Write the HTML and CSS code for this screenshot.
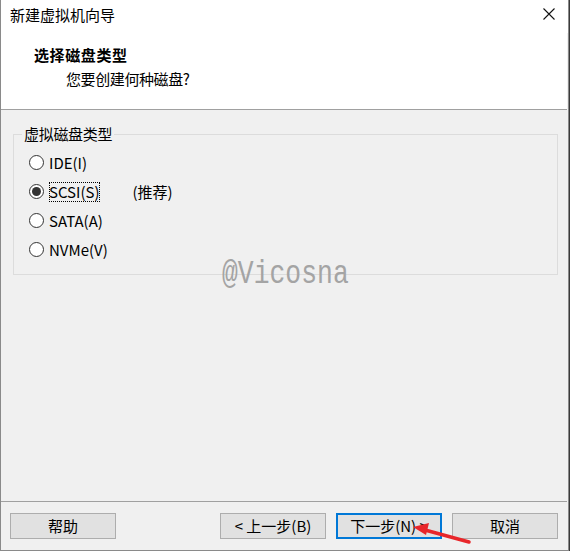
FILE: index.html
```html
<!DOCTYPE html>
<html>
<head>
<meta charset="utf-8">
<link rel="stylesheet" href="styles.css">
</head>
<body>
<div class="window">
  <div class="titlebar">
    <span class="title">新建虚拟机向导</span>
    <svg class="close" width="12" height="12" viewBox="0 0 12 12"><path d="M0.5 0.5L11.5 11.5M11.5 0.5L0.5 11.5" stroke="#111" stroke-width="1.1" fill="none"/></svg>
  </div>
  <div class="header">
    <div class="h-title">选择磁盘类型</div>
    <div class="h-sub">您要创建何种磁盘?</div>
  </div>
  <div class="body">
    <fieldset class="group">
      <legend>虚拟磁盘类型</legend>
      <div class="opt"><span class="radio"></span><span class="lbl">IDE(I)</span></div>
      <div class="opt"><span class="radio on"></span><span class="lbl focus">SCSI(S)</span><span class="rec">(推荐)</span></div>
      <div class="opt"><span class="radio"></span><span class="lbl">SATA(A)</span></div>
      <div class="opt"><span class="radio"></span><span class="lbl">NVMe(V)</span></div>
    </fieldset>
    <div class="watermark">@Vicosna</div>
  </div>
  <div class="footer">
    <button class="btn">帮助</button>
    <div class="spacer"></div>
    <button class="btn">&lt; 上一步(B)</button>
    <button class="btn primary">下一步(N) &gt;</button>
    <button class="btn">取消</button>
    <svg class="arrow" width="70" height="30" viewBox="0 0 70 30"><path d="M60 25 L16 13" stroke="#e8262a" stroke-width="3.5" stroke-linecap="round"/><path d="M4 10 L20 6 L17 18 Z" fill="#e8262a"/></svg>
  </div>
</div>
</body>
</html>
```
FILE: styles.css
```css
* { box-sizing: border-box; }
html, body { margin: 0; padding: 0; }
body {
  width: 570px;
  height: 551px;
  background: #3a3a3a;
  font-family: "Noto Sans CJK SC", "Microsoft YaHei", sans-serif;
  font-size: 15px;
  color: #000;
  overflow: hidden;
}
.window {
  width: 569px;
  height: 551px;
  background: #f0f0f0;
  border-left: 1px solid #8a8a8a;
  border-right: 1px solid #8a8a8a;
  border-bottom: 1px solid #8a8a8a;
  display: flex;
  flex-direction: column;
  position: relative;
}
.titlebar {
  height: 33px;
  background: #fff;
  display: flex;
  align-items: center;
  justify-content: space-between;
  padding: 0 14px 0 9px;
}
.title { font-size: 15px; line-height: 20px; margin-top: -4px; }
.close { margin-top: -5px; margin-right: -1px; }
.header {
  height: 77px;
  background: #fff;
  border-bottom: 1px solid #a0a0a0;
  padding: 12px 0 0 33px;
  margin-right: 1px;
}
.h-title { font-weight: bold; font-size: 15px; line-height: 20px; letter-spacing: 0.6px; }
.h-sub { font-size: 15px; line-height: 20px; margin-top: 4px; padding-left: 32px; letter-spacing: -0.4px; }
.body {
  flex: 1;
  position: relative;
  padding: 16px 10px 0 12px;
}
.group {
  margin: 0;
  border: 1px solid #dcdcdc;
  padding: 6px 0 0 15px;
  height: 149px;
  width: 545px;
}
.group legend {
  padding: 0 2px;
  margin-left: -7px;
  font-size: 15px;
  line-height: 16px;
  letter-spacing: -0.3px;
}
.opt {
  display: flex;
  align-items: center;
  height: 29px;
}
.radio {
  width: 15px;
  height: 15px;
  border: 1px solid #333;
  border-radius: 50%;
  background: #fff;
  margin-right: 5px;
  display: flex;
  align-items: center;
  justify-content: center;
}
.radio.on::after {
  content: "";
  width: 9px;
  height: 9px;
  border-radius: 50%;
  background: #333;
}
.lbl { font-size: 15px; line-height: 20px; }
.focus { outline: 1px dotted #000; outline-offset: -1px; }
.rec { margin-left: 33px; }
.watermark {
  position: absolute;
  left: 221px;
  top: 147px;
  font-family: "Liberation Mono", monospace;
  font-size: 33px;
  color: #a4a4a4;
  line-height: 36px;
  transform: scaleX(0.8);
  transform-origin: left center;
}
.footer {
  height: 49px;
  border-top: 1px solid #a0a0a0;
  margin-right: 1px;
  display: flex;
  align-items: flex-start;
  padding: 11px 9px 0 9px;
  position: relative;
}
.spacer { flex: 1; }
.btn {
  width: 106px;
  height: 26px;
  background: #e1e1e1;
  border: 1px solid #adadad;
  font-family: inherit;
  font-size: 15px;
  line-height: 20px;
  color: #000;
  padding: 0;
  margin: 0 0 0 10px;
}
.btn:first-child { margin-left: 0; }
.primary { border: 2px solid #0078d7; width: 106px; }
.arrow {
  position: absolute;
  left: 408px;
  top: 15px;
}
```
